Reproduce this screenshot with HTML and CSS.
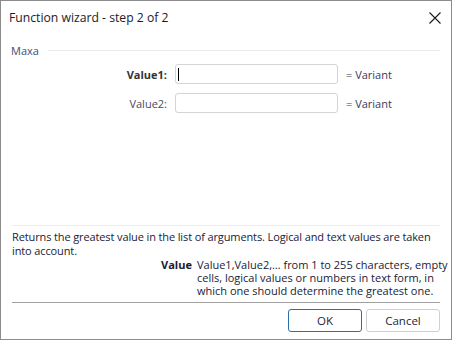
FILE: index.html
```html
<!DOCTYPE html>
<html lang="en">
<head>
  <meta charset="UTF-8" />
  <title>Function wizard - step 2 of 2</title>
  <link rel="stylesheet" href="styles.css">
</head>
<body>

  <div class="dialog">
    <div class="titlebar">
      <span class="title">Function wizard - step 2 of 2</span>
      <span class="close">
        <svg width="12" height="12" viewBox="0 0 12 12"><path d="M0.5 0.5 L11.5 11.5 M11.5 0.5 L0.5 11.5" stroke="#1a1a1a" stroke-width="1.1" fill="none"/></svg>
      </span>
    </div>

    <div class="group">
      <div class="legend"><span>Maxa</span><div class="rule"></div></div>

      <div class="row">
        <label class="active">Value1:</label>
        <div class="field"><span class="caret"></span></div>
        <span class="type">= Variant</span>
      </div>
      <div class="row">
        <label>Value2:</label>
        <div class="field"></div>
        <span class="type">= Variant</span>
      </div>
    </div>

    <div class="info">
      <p class="summary">Returns the greatest value in the list of arguments. Logical and text values are taken into account.</p>
      <div class="arg">
        <span class="arg-name">Value</span>
        <span class="arg-desc">Value1,Value2,… from 1 to 255 characters, empty cells, logical values or numbers in text form, in which one should determine the greatest one.</span>
      </div>
    </div>

    <div class="footer">
      <button class="primary">OK</button>
      <button>Cancel</button>
    </div>
  </div>

</body>
</html>
```

FILE: styles.css
```css
body {
  margin: 0;
  font-family: "Open Sans", "Noto Sans", sans-serif;
  font-size: 11px;
  color: #1a1a36;
  background: #fff;
}

.dialog {
  width: 452px;
  height: 340px;
  box-sizing: border-box;
  border: 1px solid #8c8c8c;
  display: flex;
  flex-direction: column;
}

.titlebar {
  height: 31px;
  display: flex;
  align-items: center;
  justify-content: space-between;
  padding: 1px 10px 0 8px;
}

.title {
  font-size: 12.2px;
  color: #1a1a2a;
}

.close {
  display: flex;
}

.group {
  padding: 10px 11px 0 10px;
}

.legend {
  display: flex;
  align-items: center;
  gap: 9px;
  color: #4a4a6e;
}

.legend .rule {
  flex: 1;
  height: 1px;
  background: #e8e8ee;
}

.row {
  display: flex;
  align-items: center;
  margin-top: 6px;
}

.row + .row {
  margin-top: 9px;
}

.row label {
  width: 156px;
  text-align: right;
  color: #4a4a5a;
  padding-right: 8px;
}

.row label.active {
  font-weight: bold;
  color: #333;
}

.field {
  width: 163px;
  height: 20px;
  box-sizing: border-box;
  border: 1px solid #d4d4d4;
  border-radius: 3px;
  display: flex;
  align-items: center;
  padding-left: 2px;
}

.caret {
  width: 1px;
  height: 13px;
  background: #000;
}

.type {
  margin-left: 8px;
  color: #3a3a5a;
}

.info {
  margin: auto 11px 0 11px;
  border-top: 1px solid #ececf0;
  padding-top: 4px;
}

.summary {
  margin: 0;
  line-height: 14px;
  letter-spacing: -0.12px;
}

.arg {
  display: flex;
  padding-left: 149px;
  line-height: 13px;
}

.arg-name {
  font-weight: bold;
  width: 36px;
  flex: none;
}

.arg-desc {
  width: 252px;
  flex: none;
}

.footer {
  margin: 5px 11px 0 11px;
  border-top: 1px solid #a0a0a0;
  display: flex;
  justify-content: flex-end;
  gap: 4px;
  padding: 6px 0 7px;
}

button {
  width: 74px;
  height: 23px;
  font-family: inherit;
  font-size: 11.5px;
  color: #1e1e3c;
  background: #fff;
  border: 1px solid #d0d0d0;
  border-radius: 3px;
}

button.primary {
  border-color: #2c6ea8;
}
```
